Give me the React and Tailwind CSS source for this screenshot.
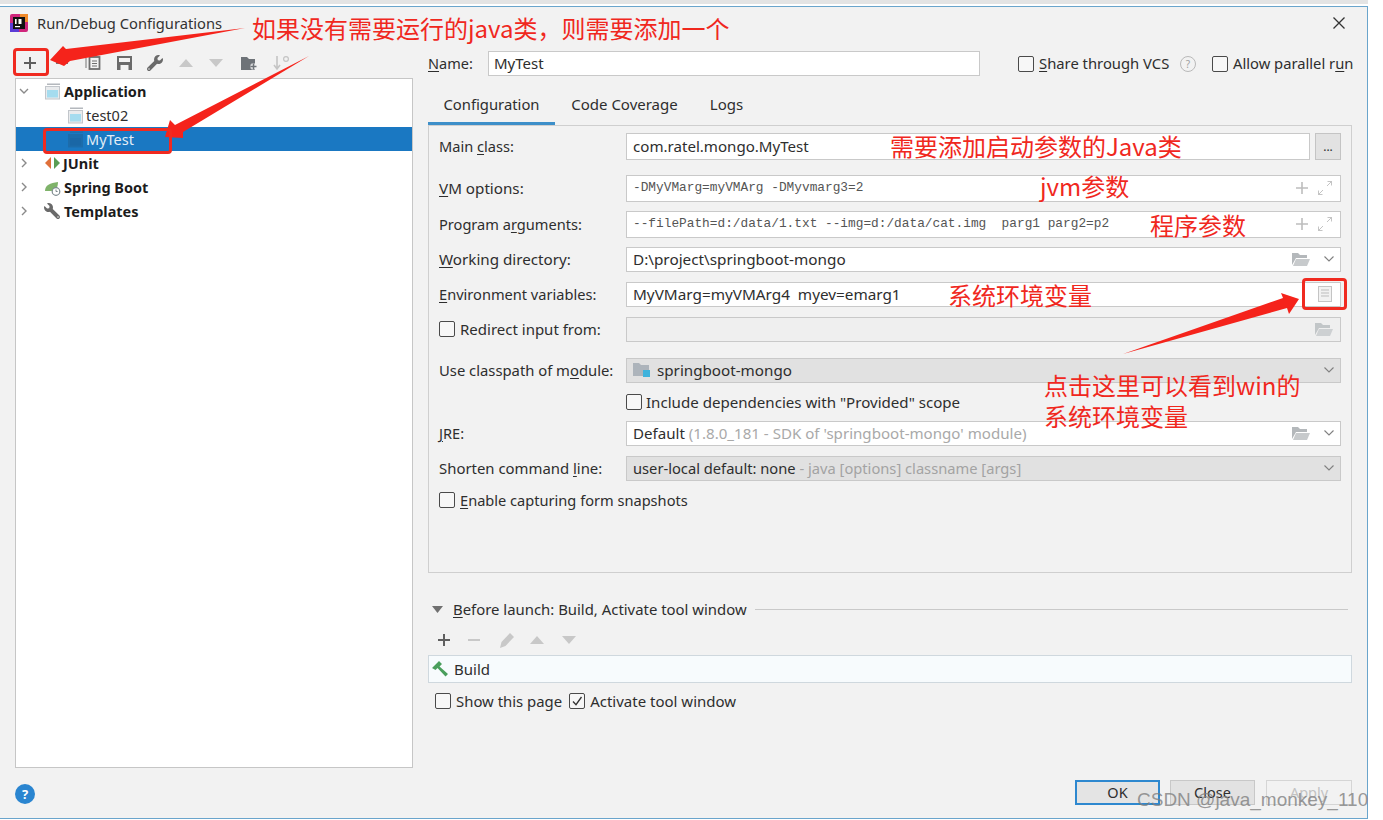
import React from "react";
import { FaWrench } from "react-icons/fa";

const U = ({ children }) => <span className="underline underline-offset-2">{children}</span>;

const Check = ({ checked }) => (
  <span className="flex h-[16px] w-[16px] shrink-0 items-center justify-center rounded-[2px] border border-[#4a4a4a] bg-[#f7f7f7]">
    {checked && (
      <svg width="12" height="12" viewBox="0 0 12 12"><path d="M2 6.5l3 3.2L10.5 2" fill="none" stroke="#333" strokeWidth="1.3" /></svg>
    )}
  </span>
);

const Chevron = ({ open }) => (
  <svg width="10" height="10" viewBox="0 0 10 10" className="shrink-0">
    {open ? <path d="M1 3l4 4 4-4" fill="none" stroke="#8a8a8a" strokeWidth="1.4" /> : <path d="M3 1l4 4-4 4" fill="none" stroke="#8a8a8a" strokeWidth="1.4" />}
  </svg>
);

const ConfigIcon = ({ dark }) => (
  <svg width="17" height="17" viewBox="0 0 17 17" className="shrink-0">
    <rect x="3" y="0.5" width="13" height="1.5" fill={dark ? "#1e6fae" : "#b4b8bd"} />
    <rect x="1" y="3" width="15" height="13.5" fill={dark ? "#1c6cab" : "#c2c6cb"} />
    <rect x="2" y="4" width="13" height="11.5" fill={dark ? "#1c6cab" : "#e9ebed"} />
    <rect x="3" y="7" width="11" height="7.5" fill={dark ? "#1a67a6" : "#a5dcef"} />
  </svg>
);

const Folder = ({ c = "#b4b8bb" }) => (
  <svg width="18" height="14" viewBox="0 0 18 14"><path d="M0 1h6l2 2h7v3H4L0 13z" fill={c} /><path d="M4 7h14l-3 7H1z" fill={c} opacity=".75" /></svg>
);

const Expand = () => (
  <svg width="42" height="16" viewBox="0 0 42 16" className="shrink-0">
    <path d="M7 2v12M1 8h12" stroke="#bdbdbd" strokeWidth="1.6" />
    <path d="M23 15l5-5M23.5 10.5V14.5h4M37 1l-5 5M32.5 1.5H36.5v4" stroke="#c4c4c4" strokeWidth="1" fill="none" />
  </svg>
);

const Caret = () => (
  <svg width="12" height="8" viewBox="0 0 12 8" className="shrink-0"><path d="M1.5 1.5l4.5 4.5 4.5-4.5" fill="none" stroke="#808080" strokeWidth="1.1" /></svg>
);

const Tri = ({ down, c = "#c8c8c8" }) => (
  <svg width="16" height="10" viewBox="0 0 16 10"><path d={down ? "M1 1h14L8 9z" : "M1 9h14L8 1z"} fill={c} /></svg>
);

const Field = ({ h = "h-[25px]", bg = "bg-white", className = "", children }) => (
  <div className={`flex flex-1 items-center border border-[#c9c9c9] pb-[1px] pl-[6px] ${h} ${bg} ${className}`}>{children}</div>
);

const Row = ({ label, size = "text-[14.6px]", className, children }) => (
  <div className={`flex items-center ${className}`}>
    <div className={`w-[187px] shrink-0 pb-[1px] ${size}`}>{label}</div>
    {children}
  </div>
);

const TreeRow = ({ sel, bold, pad, chevron, icon, text, gap = "ml-[3px]" }) => (
  <div className={`flex h-[24px] items-center ${sel ? "bg-[#1a78c2] text-[#e3edf6]" : ""} ${bold ? "font-bold text-[#1c1c1c]" : ""} ${pad}`}>
    {chevron !== undefined && <span className="mr-[15px]"><Chevron open={chevron} /></span>}
    {icon}
    <span className={gap}>{text}</span>
  </div>
);

const Btn = ({ className = "", children }) => (
  <div className={`flex h-[25px] w-[85px] items-center justify-center pb-[2px] ${className}`}>{children}</div>
);

export default function App() {
  return (
    <div className="relative h-[820px] w-[1383px] overflow-hidden bg-white text-[14.5px] leading-[20px] text-[#2e2e2e] [font-family:'Noto_Sans','Noto_Sans_CJK_SC',sans-serif]">
      <div className="h-[4px] w-[1368px] bg-[#e4e4e4]" />
      <div className="mt-[2px] flex h-[813px] w-[1368px] flex-col border-t border-r border-b border-[#6aa5cc] bg-[#f2f2f2]">
        {/* title */}
        <div className="flex h-[43px] shrink-0 items-center pb-[11px] pl-[10px] pr-[21px]">
          <svg width="18" height="18" viewBox="0 0 18 18" className="shrink-0">
            <rect x="0" y="0" width="18" height="18" rx="2" fill="#d0267c" />
            <rect x="0" y="9" width="9" height="9" fill="#5b3bd6" />
            <rect x="10" y="0" width="8" height="8" fill="#f08a2a" />
            <rect x="3" y="3" width="12" height="12" fill="#111" />
            <rect x="5" y="5" width="1.6" height="5" fill="#fff" />
            <rect x="8.5" y="5" width="3" height="5" fill="#fff" />
            <rect x="5" y="12" width="5" height="1.2" fill="#fff" />
          </svg>
          <span className="ml-[9px] text-[14.7px] text-[#333]">Run/Debug Configurations</span>
          <svg width="14" height="14" viewBox="0 0 14 14" className="ml-auto"><path d="M1.5 1.5l11 11M12.5 1.5l-11 11" stroke="#333" strokeWidth="1.3" /></svg>
        </div>

        {/* body */}
        <div className="flex h-[718px] shrink-0">
          {/* left */}
          <div className="ml-[15px] flex w-[398px] shrink-0 flex-col">
            <div className="flex h-[26px] shrink-0 items-center">
              <svg width="12" height="12" viewBox="0 0 12 12" className="ml-[9px]"><path d="M6 0v12M0 6h12" stroke="#5f5f5f" strokeWidth="2" /></svg>
              <svg width="12" height="12" viewBox="0 0 12 12" className="ml-[20px]"><path d="M0 6h12" stroke="#777" strokeWidth="2" /></svg>
              <svg width="16" height="14" viewBox="0 0 16 14" className="ml-[17px]"><path d="M1 2v10" stroke="#9a9a9a" strokeWidth="1.4" /><rect x="4.5" y="1" width="10" height="12" fill="none" stroke="#6e6e6e" strokeWidth="1.8" /><path d="M7 5h5M7 7.5h5M7 10h5" stroke="#6e6e6e" strokeWidth="1.2" /></svg>
              <svg width="15" height="14" viewBox="0 0 15 14" className="ml-[16px]"><path d="M0 0h15v14H0z" fill="#6a6a6a" /><rect x="2" y="2" width="11" height="4" fill="#f2f2f2" /><rect x="3.5" y="9" width="8" height="5" fill="#f2f2f2" /></svg>
              <FaWrench className="ml-[15px] text-[#6a6a6a]" size={16} />
              <span className="ml-[15px]"><Tri /></span>
              <span className="ml-[14px]"><Tri down /></span>
              <svg width="17" height="14" viewBox="0 0 17 14" className="ml-[17px]"><path d="M0 1h6l2 2h6v11H0z" fill="#6e7378" /><path d="M12.5 7.5v6M9.500 10.5h6" stroke="#f2f2f2" strokeWidth="4" /><path d="M12.5 7.5v6M9.500 10.5h6" stroke="#6e7378" strokeWidth="1.6" /></svg>
              <svg width="20" height="16" viewBox="0 0 20 16" className="ml-[14px]"><path d="M5 1v13M2 10l3 4 3-4" fill="none" stroke="#c4c4c4" strokeWidth="1.6" /><circle cx="14" cy="4" r="2.4" fill="none" stroke="#c4c4c4" strokeWidth="1.2" /></svg>
            </div>
            <div className="mt-[2px] flex-1 border border-[#c6c6c6] bg-white">
              <TreeRow bold pad="pl-[3px]" chevron={true} icon={<ConfigIcon />} text="Application" />
              <TreeRow pad="pl-[51px]" icon={<ConfigIcon />} text="test02" gap="ml-[2px]" />
              <TreeRow sel pad="pl-[51px]" icon={<ConfigIcon dark />} text="MyTest" gap="ml-[2px]" />
              <TreeRow bold pad="pl-[3px]" chevron={false} gap="ml-[2px]" icon={
                <svg width="17" height="14" viewBox="0 0 17 14" className="shrink-0"><path d="M7 1v12L1 7z" fill="#e0703a" /><path d="M10 1v12l6-6z" fill="#5a9e55" /></svg>
              } text="JUnit" />
              <TreeRow bold pad="pl-[3px]" chevron={false} icon={
                <svg width="17" height="17" viewBox="0 0 17 17" className="shrink-0"><path d="M1 12C1 6 6 4 14 3c0 6-3 9-7 9z" fill="#7fb36a" /><circle cx="12" cy="12.5" r="3.8" fill="#fff" stroke="#7d8a8f" strokeWidth="1.2" /><path d="M12 10.5v2h1.6" stroke="#7d8a8f" fill="none" /></svg>
              } text="Spring Boot" />
              <TreeRow bold pad="pl-[3px]" chevron={false} gap="ml-[4px]" icon={<FaWrench className="shrink-0 -scale-x-100 text-[#6a6a6a]" size={16} />} text="Templates" />
            </div>
          </div>

          {/* right */}
          <div className="ml-[15px] flex w-[924px] shrink-0 flex-col">
            <div className="mt-[1px] flex h-[25px] shrink-0 items-center whitespace-nowrap">
              <span className="w-[60px] shrink-0 pb-[2px]"><U>N</U>ame:</span>
              <div className="flex h-[25px] w-[492px] shrink-0 items-center border border-[#c9c9c9] bg-white pb-[2px] pl-[5px] text-[15px]">MyTest</div>
              <span className="ml-[38px] shrink-0"><Check /></span>
              <span className="ml-[5px] w-[131px] shrink-0 pb-[2px] text-[14.8px]"><U>S</U>hare through VCS</span>
              <span className="ml-[10px] flex h-[16px] w-[16px] shrink-0 items-center justify-center rounded-full border border-[#b9b9b9] text-[10px] text-[#a0a0a0]">?</span>
              <span className="ml-[16px] shrink-0"><Check /></span>
              <span className="ml-[5px] shrink-0 pb-[2px] text-[14.75px]">Allow parallel r<U>u</U>n</span>
            </div>

            <div className="flex h-[49px] shrink-0 items-end text-[15px]">
              <div className="flex h-[40px] w-[127px] items-center justify-center border-b-[3px] border-[#3d8fc9] text-[14.8px]">Configuration</div>
              <div className="flex h-[40px] w-[139px] items-center justify-center pb-[3px]">Code Coverage</div>
              <div className="flex h-[40px] w-[65px] items-center justify-center pb-[3px]">Logs</div>
            </div>

            <div className="flex h-[448px] shrink-0 flex-col border border-[#cfcfcf] pl-[10px] pr-[10px]">
              <Row label={<>Main <U>c</U>lass:</>} className="mt-[7px]">
                <Field h="h-[27px]" className="pl-[5px] text-[15.1px]">com.ratel.mongo.MyTest</Field>
                <div className="ml-[5px] flex h-[27px] w-[26px] items-center justify-center border border-[#c4c4c4] bg-[#e2e2e2] text-[12px] leading-none">...</div>
              </Row>
              <Row size="text-[15.2px]" label={<><U>V</U>M options:</>} className="mt-[15px]">
                <Field h="h-[27px]" className="justify-between pr-[3px] text-[12.8px] text-[#555] [font-family:'Liberation_Mono',monospace]">-DMyVMarg=myVMArg -DMyvmarg3=2<Expand /></Field>
              </Row>
              <Row label={<>Program a<U>r</U>guments:</>} className="mt-[9px]">
                <Field h="h-[27px]" className="justify-between whitespace-pre pr-[3px] text-[12.8px] text-[#555] [font-family:'Liberation_Mono',monospace]">--filePath=d:/data/1.txt --img=d:/data/cat.img  parg1 parg2=p2<Expand /></Field>
              </Row>
              <Row size="text-[15.2px]" label={<><U>W</U>orking directory:</>} className="mt-[9px]">
                <Field className="justify-between pr-[5px] text-[15.3px]">D:\project\springboot-mongo<span className="flex items-center gap-[13px]"><Folder /><Caret /></span></Field>
              </Row>
              <Row label={<><U>E</U>nvironment variables:</>} className="mt-[10px]">
                <Field className="justify-between whitespace-pre pr-[8px] text-[15.3px]">MyVMarg=myVMArg4  myev=emarg1
                  <svg width="14" height="16" viewBox="0 0 14 16"><rect x="0.5" y="0.5" width="13" height="15" fill="#f2f2f2" stroke="#c4c4c4" /><path d="M3 4h8M3 7h8M3 10h8" stroke="#bdbdbd" /></svg>
                </Field>
              </Row>
              <Row size="text-[15px]" label={<span className="flex items-center gap-[5px]"><Check /><span>Redirect input from:</span></span>} className="mt-[10px]">
                <Field bg="bg-[#efefef]" className="justify-end pr-[7px]"><Folder c="#c2c6c8" /></Field>
              </Row>
              <Row size="text-[14.8px]" label={<>Use classpath of m<U>o</U>dule:</>} className="mt-[16px]">
                <Field bg="bg-[#e1e1e1]" className="justify-between pr-[5px] text-[15.2px]">
                  <span className="flex items-center gap-[6px]">
                    <svg width="18" height="14" viewBox="0 0 18 14"><path d="M0 0h6l2 2h8v11H0z" fill="#adb4bb" /><rect x="10" y="7" width="7" height="7" fill="#3fb3dc" /></svg>
                    springboot-mongo
                  </span>
                  <Caret />
                </Field>
              </Row>
              <div className="mt-[6px] flex h-[26px] items-center gap-[4px] pl-[187px] text-[15.1px]"><Check /><span className="pb-[1px]">Include dependencies with "Provided" scope</span></div>
              <Row label={<><U>J</U>RE:</>} className="mt-[6px]">
                <Field className="justify-between pr-[5px] text-[15.1px]">
                  <span>Default <span className="text-[#a9a9a9]">(1.8.0_181 - SDK of 'springboot-mongo' module)</span></span>
                  <span className="flex items-center gap-[13px]"><Folder /><Caret /></span>
                </Field>
              </Row>
              <Row size="text-[14.9px]" label={<>Shorten command <U>l</U>ine:</>} className="mt-[10px]">
                <Field bg="bg-[#e1e1e1]" className="justify-between pr-[5px] text-[14.7px]">
                  <span>user-local default: none <span className="text-[#a3a3a3]">- java [options] classname [args]</span></span>
                  <Caret />
                </Field>
              </Row>
              <div className="mt-[8px] flex h-[22px] items-center gap-[5px] text-[14.6px]"><Check /><span className="pb-[1px]"><U>E</U>nable capturing form snapshots</span></div>
            </div>

            <div className="mt-[26px] flex h-[20px] shrink-0 items-center pl-[4px] text-[14.9px]">
              <svg width="11" height="7" viewBox="0 0 11 7"><path d="M0 0h11L5.5 7z" fill="#707070" /></svg>
              <span className="ml-[10px] pb-[1px]"><U>B</U>efore launch: Build, Activate tool window</span>
              <div className="ml-[8px] mr-[4px] h-px flex-1 bg-[#c9c9c9]" />
            </div>
            <div className="mt-[9px] flex h-[24px] shrink-0 items-center pl-[10px]">
              <svg width="12" height="12" viewBox="0 0 12 12"><path d="M6 0v12M0 6h12" stroke="#5f5f5f" strokeWidth="2" /></svg>
              <svg width="12" height="12" viewBox="0 0 12 12" className="ml-[18px]"><path d="M0 6h12" stroke="#c8c8c8" strokeWidth="2" /></svg>
              <svg width="16" height="18" viewBox="0 0 16 18" className="ml-[19px]"><path d="M1 17l1.5-6L11 2l4 4-8.500 9z" fill="#c8c8c8" /></svg>
              <span className="ml-[14px]"><Tri /></span>
              <span className="ml-[16px]"><Tri down /></span>
            </div>
            <div className="mt-[3px] flex h-[28px] shrink-0 items-center gap-[5px] border border-[#cfd8de] bg-[#f7fbfd] pl-[2px]">
              <svg width="18" height="18" viewBox="0 0 18 18"><path d="M1 8l7-7 3 3-2.500 2.500L17 14l-2.500 2.500L6.500 8 4.500 10z" fill="#4a9e5c" /></svg>
              <span className="pb-[1px] text-[15px]">Build</span>
            </div>
            <div className="mt-[8px] flex h-[20px] shrink-0 items-center pl-[7px] text-[14.9px]">
              <Check /><span className="ml-[5px] pb-[1px]">Show this page</span>
              <span className="ml-[7px]"><Check checked /></span><span className="ml-[5px] pb-[1px] text-[15px]">Activate tool window</span>
            </div>
          </div>
        </div>

        {/* footer */}
        <div className="flex flex-1 items-start pl-[15px] pr-[15px] pt-[12px]">
          <span className="mt-[4px] flex h-[20px] w-[20px] items-center justify-center rounded-full bg-[#2a85d0] text-[13px] font-bold text-white">?</span>
          <div className="ml-auto flex items-center gap-[10px]">
            <Btn className="border-2 border-[#2e88cf] bg-[#e4e4e4]">OK</Btn>
            <Btn className="border border-[#c8c8c8] bg-[#e2e2e2]">Close</Btn>
            <Btn className="ml-[1px] w-[86px] border border-[#d5d5d5] text-[#c2c2c2]">Apply</Btn>
          </div>
        </div>
      </div>

      {/* annotations */}
      <div className="pointer-events-none absolute inset-0 text-[24px] leading-[30px] text-[#f0281e] [font-family:'Noto_Sans_CJK_SC',sans-serif]">
        <svg width="1383" height="820" viewBox="0 0 1383 820" className="absolute left-0 top-0">
          <path d="M50 60L63 46L66 49L245 28L70 61L64 66Z" fill="#f5231b" />
          <path d="M165 137L170 120L175 125L309 56L183 132L183 138Z" fill="#f5231b" />
          <path d="M1299 299L1281 293L1283 298L1123 354L1287 308L1289 314Z" fill="#f5231b" />
        </svg>
        <div className="absolute left-[13px] top-[48px] h-[28px] w-[36px] rounded-[4px] border-[3px] border-[#f02a20]" />
        <div className="absolute left-[43px] top-[128px] h-[26px] w-[129px] rounded-[4px] border-[3px] border-[#f02a20]" />
        <div className="absolute left-[1302px] top-[278px] h-[32px] w-[45px] rounded-[4px] border-[3px] border-[#f02a20]" />
        <span className="absolute left-[252px] top-[13px]">如果没有需要运行的java类，则需要添加一个</span>
        <span className="absolute left-[890px] top-[131px]">需要添加启动参数的Java类</span>
        <span className="absolute left-[1040px] top-[171px]">jvm参数</span>
        <span className="absolute left-[1150px] top-[210px]">程序参数</span>
        <span className="absolute left-[948px] top-[280px]">系统环境变量</span>
        <span className="absolute left-[1044px] top-[370px]">点击这里可以看到win的</span>
        <span className="absolute left-[1044px] top-[401px]">系统环境变量</span>
      </div>
      <span className="pointer-events-none absolute left-[1137px] top-[789px] text-[19px] leading-[22px] text-[#7f7f7f]/80 [font-family:'Liberation_Sans',sans-serif]">CSDN @java_monkey_110</span>
    </div>
  );
}
